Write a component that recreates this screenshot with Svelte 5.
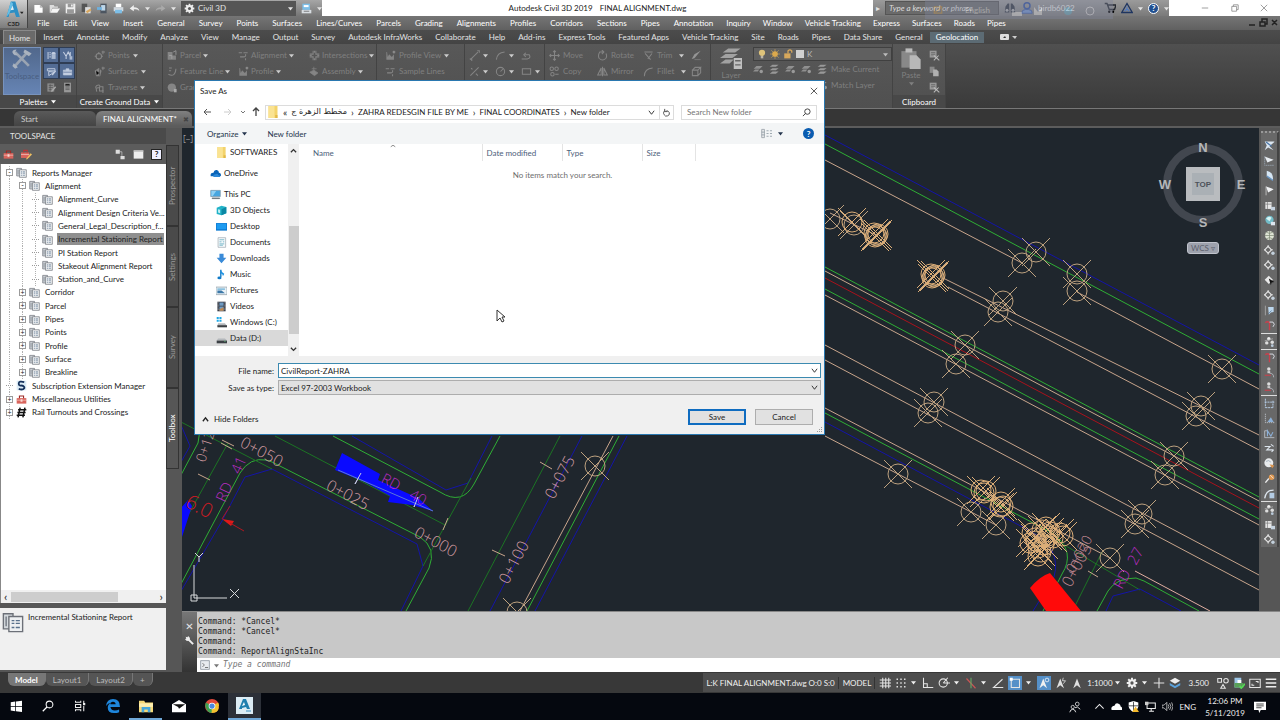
<script>
    const menus = ["File", "Edit", "View", "Insert", "General", "Survey", "Points", "Surfaces", "Lines/Curves", "Parcels", "Grading", "Alignments", "Profiles", "Corridors", "Sections", "Pipes", "Annotation"];
    const moreMenus = ["Inquiry", "Window", "Vehicle Tracking", "Express", "Surfaces", "Roads", "Pipes"];

    const ribbonTabs = ["Home", "Insert", "Annotate", "Modify", "Analyze", "View", "Manage", "Output", "Survey", "Autodesk InfraWorks", "Collaborate", "Help", "Add-ins", "Express Tools", "Featured Apps", "Vehicle Tracking", "Site", "Roads", "Pipes", "Data Share", "General", "Geolocation"];

    const groundData = [["points", "Points"], ["surface", "Surfaces"], ["traverse", "Traverse"]];

    const designColumns = [
        [["parcel", "Parcel"], ["curve", "Feature Line"], ["grading", "Grading"]],
        [["align", "Alignment"], ["profile", "Profile"]],
        [["cross", "Intersections"], ["assembly", "Assembly"]]
    ];

    const tree = [
        { label: "Reports Manager", level: 0, box: "-", icon: "report" },
        { label: "Alignment", level: 1, box: "-", icon: "report" },
        { label: "Alignment_Curve", level: 2, icon: "report" },
        { label: "Alignment Design Criteria Ve...", level: 2, icon: "report" },
        { label: "General_Legal_Description_f...", level: 2, icon: "report" },
        { label: "Incremental Stationing Report", level: 2, icon: "report", selected: true },
        { label: "PI Station Report", level: 2, icon: "report" },
        { label: "Stakeout Alignment Report", level: 2, icon: "report" },
        { label: "Station_and_Curve", level: 2, icon: "report" },
        { label: "Corridor", level: 1, box: "+", icon: "report" },
        { label: "Parcel", level: 1, box: "+", icon: "report" },
        { label: "Pipes", level: 1, box: "+", icon: "report" },
        { label: "Points", level: 1, box: "+", icon: "report" },
        { label: "Profile", level: 1, box: "+", icon: "report" },
        { label: "Surface", level: 1, box: "+", icon: "report" },
        { label: "Breakline", level: 1, box: "+", icon: "report" },
        { label: "Subscription Extension Manager", level: 0, icon: "sub" },
        { label: "Miscellaneous Utilities", level: 0, box: "+", icon: "toolbox" },
        { label: "Rail Turnouts and Crossings", level: 0, box: "+", icon: "rail" }
    ];

    const sideTabs = ["Prospector", "Settings", "Survey", "Toolbox"];

    const places = [
        { label: "SOFTWARES", icon: "folder", child: true },
        { label: "OneDrive", icon: "cloud", root: true },
        { label: "This PC", icon: "pc", root: true },
        { label: "3D Objects", icon: "cube", child: true },
        { label: "Desktop", icon: "desktop", child: true },
        { label: "Documents", icon: "doc", child: true },
        { label: "Downloads", icon: "down", child: true },
        { label: "Music", icon: "music", child: true },
        { label: "Pictures", icon: "picture", child: true },
        { label: "Videos", icon: "video", child: true },
        { label: "Windows (C:)", icon: "winDrive", child: true },
        { label: "Data (D:)", icon: "drive", child: true, selected: true }
    ];

    const crumbs = ["مخطط الزهرة ج", "ZAHRA REDESGIN FILE BY ME", "FINAL COORDINATES", "New folder"];

    const toolGroups = [
        ["t1", "t2", "t3", "t4", "t5", "t6", "t7", "t8", "t8", "t9", "t8", "t10", "t11"],
        ["t12"],
        ["t11", "t13", "t13"],
        ["t14", "t15", "t16", "t17", "t18", "t19", "t20"],
        ["t12", "t5", "t8"]
    ];

    const history = ["Command: *Cancel*", "Command: *Cancel*", "Command:", "Command: ReportAlignStaInc"];

    let fileName = "CivilReport-ZAHRA";

    // drawing entities, in canvas coordinates
    const tan = "#c8a58c";
    const green = "#2fae35";
    const darkGreen = "#1c7424";
    const blue = "#1414a8";
    const lines = [
        [blue, "M825 135L1259 365"],
        [green, "M825 144L1259 374"],
        [tan, "M825 160L1022 263M1077 292L1259 389M943 278L1259 435M948 287L1259 450"],
        [green, "M825 267L1259 497M825 289L1259 519"],
        [tan, "M825 271L1259 501M825 295L1259 525M825 345L1259 575M825 360L1259 590M825 408L1110 558M825 436L898 474L971 512L996 525M876 235L830 213"],
        ["#a8121c", "M825 278L1259 508"],
        [green, "M825 413L1054 534Q1076 552 1062 574L1043 611"],
        [blue, "M825 422L1030 531Q1062 548 1054 577L1033 611"],
        [darkGreen, "M1075 606L1102 552M1056 540L1140 590"],
        [green, "M1097 611L1108 591Q1116 578 1136 578L1144 581L1199 611"],
        [blue, "M1106 611L1113 596L1140 589L1181 611"],
        ["#e0aea0", "M1135 571L1210 611"],
        [green, "M181 584L240 473Q250 457 266 460L272 462L420 537Q437 548 429 568L406 611"],
        [blue, "M181 591L222 521L245 477L272 469L417 544L423 566L401 611"],
        [green, "M333 436L440 492Q462 506 474 484L500 436"],
        [blue, "M352 436L446 490L468 483L492 436"],
        [darkGreen, "M275 436L445 525M181 422L272 469M560 436L468 611M471 478L423 566M181 528L228 443"],
        [green, "M181 475L198 443L200 430M619 436L527 611"],
        [blue, "M181 462L190 446L181 425M582 436L490 611M627 436L535 611"],
        [tan, "M613 436L520 611M540 462L552 469M492 550L505 556M443 530L448 518M198 474L210 480M221 443L232 449M222 440L234 446M1088 571L1098 577"],
        ["#b8bce0", "M355 484L361 473M414 507L418 497"]
    ];

    const points = [[830, 219], [854, 225], [876, 235], [933, 276], [1036, 252], [1022, 263], [1077, 274], [1077, 291], [1003, 301], [998, 312], [965, 345], [956, 364], [1222, 369], [934, 402], [928, 413], [1201, 406], [1196, 416], [898, 474], [971, 512], [996, 525], [1110, 558], [1174, 456], [1165, 475], [1142, 514], [1135, 524], [595, 466], [517, 612]];

    const densePoints = [[852, 222], [874, 233], [877, 236], [875, 237], [878, 234], [931, 274], [934, 277], [932, 278], [935, 275], [981, 490], [984, 493], [986, 491], [1001, 502], [1003, 506], [1000, 507], [1032, 533], [1035, 538], [1030, 543], [1038, 548], [1042, 530], [1046, 527], [1050, 532], [1053, 538], [1060, 533], [1063, 536], [1044, 545], [1041, 552], [1038, 556], [1036, 541], [1048, 536]];

    const labels = [
        ["0+050", 239, 446, 28, "#d09aa0", 16],
        ["0+025", 325, 489, 28, "#d09aa0", 16],
        ["0+000", 413, 536, 28, "#d09aa0", 16],
        ["0+075", 554, 500, -62, "#d09aa0", 16],
        ["0+100", 508, 585, -62, "#d09aa0", 16],
        ["0+12", 205, 463, -72, "#d09aa0", 14],
        ["0+005", 1071, 588, -62, "#c48a94", 16],
        ["0+020", 1074, 574, -62, "#c48a94", 14],
        ["RD", 380, 482, 28, "#b82cc0", 15],
        ["40", 408, 498, 28, "#b82cc0", 15],
        ["RD", 225, 503, -66, "#b82cc0", 15],
        ["41", 240, 475, -66, "#b82cc0", 15],
        ["RD", 1122, 590, -62, "#b82cc0", 15],
        ["27", 1136, 566, -62, "#b82cc0", 15],
        ["6.0", 184, 506, 28, "#cc1c24", 20]
    ];

    const g = 'fill="none" stroke="#858585" stroke-width="1.5"';
    const w = 'fill="none" stroke="#e4e4e4" stroke-width="1.4"';
    const icons = {
        newDoc: '<path d="M2 3h8l4 4v7H2z" fill="#fff"/><path d="M10 3v4h4" fill="#bbb"/>',
        open: '<path d="M1 3h6l1 2h5v2H5l-3 7H1z" fill="#ddd"/><path d="M5 8h11l-4 6H2z" fill="#f5f5f5"/>',
        save: '<path d="M1 1h14v14H1z" fill="#eee"/><path d="M4 1h8v5H4zM3 9h10v6H3z" fill="#999"/><path d="M9 2h2v3H9z" fill="#fff"/>',
        saveAs: '<path d="M1 1h8v12H1z" fill="#555"/><path d="M6 6h8v9H6z" fill="#ddd"/><path d="M7 12l7-4 1 3-6 4z" fill="#d8a860"/>',
        mobile: '<path d="M5 1h9v14H5z" fill="#4c5560"/><path d="M6 3h6v8H6z" fill="#bdd6e8"/><path d="M0 6h7v4H0z" fill="#6db1df"/>',
        share: '<path d="M2 1h11v9H2z" fill="#7dbfe8"/><path d="M4 3h7v3H4z" fill="#fff"/><path d="M1 10h14v5H1z" fill="#d8dde2"/><path d="M4 12h8" stroke="#555"/>',
        print: '<path d="M4 1h8v5H4z" fill="#fff"/><path d="M1 6h14v6H1z" fill="#d2d9df"/><path d="M3 10h10v5H3z" fill="#7dbfe8"/>',
        undo: '<path d="M1 8l6-5v3c5 0 8 2 8 6-2-3-4-3-8-3v3z" fill="#eee"/>',
        redo: '<path d="M15 8L9 3v3c-5 0-8 2-8 6 2-3 4-3 8-3v3z" fill="#aaa"/>',
        gear: '<path d="M8 1v14M1 8h14M3 3l10 10M13 3L3 13" stroke="#eee" stroke-width="2.6"/><circle cx="8" cy="8" r="5" fill="#eee"/><circle cx="8" cy="8" r="2.2" fill="#555"/>',
        tools: '<path d="M3 13L12 3M3 3l10 10" stroke="#9aa4b2" stroke-width="2"/><path d="M1 3q0-2 3-2L3 3l2 2q-3 1-4-2zM10 1l5 3-2 2-4-3zM2 11l3 3-2 1-2-2z" fill="#aab3bf"/>',
        p1: '<path d="M3 3v10M5 4h2M5 7h2M5 10h2" stroke="#c2cde0" stroke-width="1.5"/><ellipse cx="11" cy="5" rx="3" ry="2" fill="#c2cde0"/><path d="M8 6h6v7H8z" fill="#aab9d0"/>',
        p2: '<path d="M2 3l4 6 3-6 3 6V3M6 9v4" fill="none" stroke="#c2cde0" stroke-width="1.6"/><path d="M11 9h4v5h-4z" fill="#aab9d0"/>',
        p3: '<path d="M2 4h11v3H2zM4 8l8 1-8 5z" fill="none" stroke="#c2cde0" stroke-width="1.4"/><path d="M9 13l5-6" stroke="#c2cde0" stroke-width="2"/>',
        p4: '<path d="M2 6h12v7H2zM6 6V4h4v2" fill="#c2cde0" stroke="#c2cde0"/><path d="M2 9h12" stroke="#536c94"/>',
        p5: '<path d="M2 2h10v12H2z" fill="#8a8a8a"/><path d="M4 5h6M4 8h6M4 11h4M6 3v10" stroke="#555"/><path d="M8 14l6-7" stroke="#aaa" stroke-width="2"/>',
        p6: '<path d="M3 1h10v14H3z" fill="#999"/><path d="M5 3h6v2H5zM5 7h6M5 9h6M5 11h6" stroke="#555"/>',
        points: `<circle cx="7" cy="9" r="4" ${g}/><path d="M7 3v3M7 12v3M1 9h3M10 9h3M13 1v5M11 3h5" ${g}/>`,
        surface: '<path d="M1 7l6-4 4 4-2 8H3z" fill="#858585"/><path d="M3 7l5 3-4 3M8 4v10M13 1v5M11 3h5" stroke="#555"/><path d="M13 1v5M11 3h5" stroke="#999"/>',
        traverse: `<path d="M2 8q2-5 7-3M4 14l-1-5 5-1M8 7h5v6H8z" ${g}/><path d="M13 12v4" ${g}/>`,
        parcel: '<path d="M1 3h7v5h5v6H1z" fill="#858585"/><path d="M3 8h4v5M9 3l4-2v6" stroke="#aaa" fill="none"/>',
        curve: `<path d="M2 12q10 5 11-8M3 3h4M3 7h3" ${g}/>`,
        grading: '<circle cx="7" cy="8" r="6" fill="#858585"/><path d="M10 10h4v5h-4z" fill="#aaa"/>',
        align: `<path d="M1 4h5M8 4h6M3 10h5q4 0 3-4M11 12v3" ${g}/>`,
        profile: '<path d="M2 3v11h11V6l-3 4-4-4-2 4-1-7z" fill="#858585"/><path d="M13 1v4M11 3h4" stroke="#999" stroke-width="1.5"/>',
        cross: `<path d="M6 1v5H1M10 1v5h5M6 15v-5H1M10 15v-5h5M8 1v3M8 12v3M1 8h3M12 8h3" ${g}/>`,
        assembly: '<path d="M1 9l6-3 6 4-5 4zM7 1v6M4 4h7" fill="#858585" stroke="#858585"/>',
        line: `<path d="M2 14L13 3" ${g}/><path d="M1 13h3v3M12 1h3v3" ${g}/>`,
        arc: `<path d="M2 14Q3 4 14 3" ${g}/>`,
        pline: `<path d="M1 13h8q6-1 3-6H5" ${g}/><path d="M7 4L4 7l3 3" ${g}/>`,
        xline: `<path d="M2 14L14 2M3 3l2 2M10 11l3 3" ${g}/>`,
        circle: `<circle cx="8" cy="8" r="6" ${g}/><path d="M8 8l4-4" ${g}/>`,
        rect: `<path d="M2 4h12v8H2z" ${g}/>`,
        move: `<path d="M8 1v14M1 8h14M6 3l2-2 2 2M6 13l2 2 2-2M3 6L1 8l2 2M13 6l2 2-2 2" ${g}/>`,
        copy: `<circle cx="4" cy="4" r="2.5" ${g}/><circle cx="11" cy="4" r="2.5" ${g}/><circle cx="5" cy="12" r="2.5" ${g}/><path d="M9 12h5" ${g}/>`,
        rotate: `<path d="M9 3H4Q1 8 3 12q5 5 10 0 2-3 0-7M7 0l3 3-3 3" ${g}/>`,
        mirror: `<path d="M6 3v10H1zM10 3v10h5zM8 1v14" ${g}/>`,
        trim: `<path d="M2 3h12M3 5l8 9M13 5l-6 8" ${g}/>`,
        fillet: `<path d="M2 15Q2 4 14 3" ${g}/>`,
        erase: '<path d="M1 13l4-1 9-11-9 5z" fill="#959595"/><path d="M5 14h9" stroke="#858585"/>',
        box: `<path d="M2 6h8v8H2zM2 6l4-4h8l-4 4M14 2v8l-4 4" ${g}/>`,
        layers: '<path d="M6 1h9l-4 3H2zM4 5h9l-4 3H0zM4 9h6l-3 3H0z" fill="#a2a2a2"/><path d="M10 8h6v8h-6z" fill="#c0c0c0"/><path d="M11 10h4M11 13h4" stroke="#666"/>',
        lay: '<path d="M5 3h9l-4 4H1zM3 8h6l-2 3H0z" fill="#909090"/><circle cx="12" cy="11" r="2.5" fill="#999"/>',
        lay2: '<path d="M5 1h9l-4 3H1zM5 6h9l-4 3H1zM5 11h9l-4 3H1z" fill="#999"/>',
        bulb: '<circle cx="8" cy="6" r="5" fill="#dec37a"/><path d="M6 11h4v4H6z" fill="#bdb6a8"/>',
        sun: '<path d="M8 0v16M0 8h16M2 2l12 12M14 2L2 14" stroke="#caa556"/><circle cx="8" cy="8" r="4.5" fill="#dca94c"/>',
        lock: '<path d="M2 7h10v8H2z" fill="#d7a85c"/><path d="M8 7V3q3-3 6 0v3" fill="none" stroke="#d7a85c" stroke-width="2"/>',
        paste: '<path d="M1 3h11v12H1z" fill="#888"/><path d="M4 1h5v3H4z" fill="#bbb"/><path d="M7 6h5l3 3v7H7z" fill="#b8b8b8"/>',
        cut: '<path d="M1 1h10v10H1z" fill="#999"/><path d="M3 4h6M3 7h6" stroke="#555"/><path d="M7 8l8 7M14 8l-7 7" stroke="#bbb" stroke-width="1.5"/>',
        pages: '<path d="M1 1h7v9H1z" fill="#888"/><path d="M6 5h5l3 3v7H6z" fill="#b0b0b0"/>',
        person: '<circle cx="8" cy="5" r="4" fill="none" stroke="#2f4f9c" stroke-width="2"/><path d="M1 15q0-5 5-5h4q5 0 5 5z" fill="#7090c8" stroke="#2f4f9c"/>',
        binoc: '<path d="M2 6l3-4h2v12H1zM14 6l-3-4H9v12h6z" fill="#303640"/><circle cx="4" cy="11" r="2" fill="#aaa"/><circle cx="12" cy="11" r="2" fill="#aaa"/>',
        cart: '<path d="M1 2h3l3 8h7l2-6H5" fill="none" stroke="#23272f" stroke-width="1.8"/><circle cx="7" cy="13" r="1.6"/><circle cx="12" cy="13" r="1.6"/>',
        app: '<path d="M8 2L1 14h14z" fill="none" stroke="#1f3560" stroke-width="1.8"/><path d="M8 6v5M5 12l3-3 3 3" stroke="#4e79c0" fill="none" stroke-width="1.5"/>',
        report: '<path d="M1 2h7v11H1z" fill="#d5dade" stroke="#6c7078"/><path d="M5 4h10v11H5z" fill="#eef0f2" stroke="#6c7078"/><path d="M7 7h2M10 7h3M7 9h2M10 9h3M7 12h2M10 12h3" stroke="#59718c"/><path d="M3 4v7" stroke="#707780"/>',
        sub: '<path d="M1 1h14v14H1z" fill="#dcecf6"/><path d="M12 3Q4 1 4 5t4 3q5 1 4 4-2 3-8 1" fill="none" stroke="#14305a" stroke-width="2.6"/>',
        toolbox: '<path d="M1 6h14v8H1z" fill="#d8645c"/><path d="M5 6V3h6v3" fill="none" stroke="#9b2a26" stroke-width="1.6"/><path d="M1 9h14M7 8h2v3H7z" stroke="#f4c6c0" fill="#fff"/>',
        toolboxEdit: '<path d="M0 5h12v8H0z" fill="#d8645c"/><path d="M4 5V2h5v3" fill="none" stroke="#b33" stroke-width="1.5"/><path d="M0 8h12" stroke="#f4c6c0"/><path d="M7 15l7-9 2 2-7 7z" fill="#f0c060"/>',
        rail: '<path d="M6 1L3 15M13 1l-3 14M3 4h12M2 8h12M1 12h12" stroke="#111" stroke-width="2.2" fill="none"/>',
        nodes: '<path d="M1 1h6v6H1zM8 10h6v5H8z" fill="#ddd"/><path d="M7 4h3v6" stroke="#ccc" fill="none"/>',
        panel: '<path d="M1 2h14v12H1z" fill="#eee"/><path d="M1 2h14v2H1z" fill="#bbb"/>',
        folder: '<path d="M2 0h12v16H2z" fill="#f3d36b"/><path d="M2 0h8v16H2z" fill="#fae392"/><path d="M11 12h3v4h-3z" fill="#e2b848"/>',
        cloud: '<path d="M1 12q-1-5 4-5 1-5 5-4 3 1 3 4 3 0 3 4 0 1-2 1z" fill="#0a64b8"/><path d="M5 13q-1-4 3-4 3-2 4 1 3 0 3 3z" fill="#2b88d8"/>',
        pc: '<path d="M1 2h14v9H1z" fill="#47a6e0" stroke="#7d96a8"/><path d="M2 3h7l-5 7H2z" fill="#8fd0f4"/><path d="M3 13h11v1H3z" stroke="#7a8892"/>',
        cube: '<path d="M1 4l7-3 7 2v9l-7 3-7-2z" fill="#22b3c8"/><path d="M8 6l7-3v9l-7 3z" fill="#0b87a4"/><path d="M3 6l3 1v5l-3-1z" fill="#c4f1f5"/>',
        desktop: '<path d="M0 3h16v11H0z" fill="#0b78d0"/><path d="M1 4h14v8H1z" fill="#1e9bf0"/>',
        doc: '<path d="M3 1h11v14H3z" fill="#f5f9fb" stroke="#9aa8b0"/><path d="M5 4h7M5 7h3M10 7h2M5 10h7M5 12h5" stroke="#4aa0b8"/>',
        down: '<path d="M5 1h6v6h4l-7 8-7-8h4z" fill="#3a8bd8"/>',
        music: '<path d="M7 1v11" stroke="#0f7ac8" stroke-width="2"/><path d="M7 1q1 4 5 6-1 3-2 3 0-3-3-4z" fill="#1c90e0"/><ellipse cx="5" cy="13" rx="3" ry="2" fill="#0f7ac8"/>',
        picture: '<path d="M0 3h16v11H0z" fill="#e9f1f6" stroke="#8a9aa4"/><path d="M2 8h6l5 4H2z" fill="#3c78a8"/><path d="M2 6h11" stroke="#74b4d8" stroke-width="2"/>',
        video: '<path d="M2 1h12v14H2z" fill="#3a3f4a"/><path d="M5 2h6v5H5zM5 8h6v6H5z" fill="#6f9cc4"/><path d="M5 12l6-3v5H5z" fill="#c08850"/><path d="M3 2v12M13 2v12" stroke="#ccc" stroke-dasharray="1 1"/>',
        winDrive: '<path d="M1 0h3v3H1zM5 0h3v3H5zM1 4h3v3H1zM5 4h3v3H5z" fill="#1ca8e8"/><path d="M3 9h10l3 4H2z" fill="#b4b8bc"/><path d="M2 12h14v3H2z" fill="#3c4044"/>',
        drive: '<path d="M3 8h10l3 3H1z" fill="#b4b8bc"/><path d="M1 11h15v4H1z" fill="#3c4044"/><path d="M12 12h2" stroke="#6d8"/>',
        views: '<path d="M1 2h4v12H1z" fill="#e8eaec" stroke="#8a949c"/><path d="M8 4h3M8 8h3M8 12h3M13 4h3M13 8h3M13 12h3M1 6h4M1 10h4" stroke="#7c8a94"/>',
        wrench: '<path d="M4 4l9 9" stroke="#eee" stroke-width="3"/><path d="M1 1l3 1 1-2 3 3-1 4-4 1-3-3 2-1z" fill="#eee"/>',
        prompt: '<path d="M1 1h14v14H1z" fill="#e8ecf0" stroke="#6f7a86"/><path d="M4 5l3 3-3 3M8 12h5" fill="none" stroke="#333"/>',
        grid: `<path d="M5 1v14M9 1v14M13 1v14M1 4h15M1 8h15M1 12h15" ${w}/>`,
        snap: '<path d="M2 3h2M7 3h2M12 3h2M2 8h2M7 8h2M12 8h2M2 13h2M7 13h2M12 13h2" stroke="#ddd" stroke-width="2"/>',
        ortho: `<path d="M2 1v13h13M2 9h5v5" ${w}/>`,
        polar: `<circle cx="7" cy="8" r="5.5" ${w}/><path d="M7 8h9M7 8l6-7" ${w}/>`,
        iso: '<path d="M2 2l12 13" stroke="#c55" stroke-width="1.5"/><path d="M8 1v14" stroke="#6a6" stroke-width="1.5"/>',
        angle: `<path d="M14 3L2 14h13" ${w}/>`,
        osnap: `<path d="M3 3h11v11H3z" ${w}/><path d="M1 1h4v4H1z" fill="#fff"/>`,
        annot: '<path d="M7 2l5 13-5-4-5 4z" fill="#f0f0f0"/><circle cx="12" cy="4" r="2.5" fill="none" stroke="#fff"/>',
        annot2: '<path d="M7 2l5 13-5-4-5 4z" fill="#e0e0e0"/><path d="M11 1l-1 4h4l-3 4" fill="none" stroke="#eee"/>',
        annot3: '<path d="M8 2l5 13-5-4-5 4z" fill="#e0e0e0"/>',
        plus: `<path d="M8 1v14M1 8h14" ${w}/>`,
        stack: '<path d="M8 1l7 4-7 4-7-4z" fill="#eee"/><path d="M1 8l7 4 7-4v3l-7 4-7-4z" fill="#5ba2dc"/>',
        shapes: `<path d="M1 2h5v5H1zM5 15l3-5 3 5z" ${w}/><circle cx="12" cy="5" r="3" ${w}/>`,
        image: '<path d="M2 1h9v13H2z" fill="#9fc8e8"/><path d="M2 8h12v6H2z" fill="#58a058"/><path d="M6 4h5v4H6z" fill="#fff"/><path d="M9 12l2 3 5-6" fill="none" stroke="#5d5" stroke-width="2"/>',
        full: `<path d="M1 3h14v11H1zM9 6h3v2M7 11H4V9" ${w}/>`,
        burger: '<path d="M1 3h14M1 8h14M1 13h14" stroke="#eee" stroke-width="2"/>',
        win: '<path d="M1 3l6-1v6H1zM8 2l8-1v7H8zM1 9h6v6l-6-1zM8 9h8v7l-8-1z" fill="#fff"/>',
        search: '<circle cx="10" cy="6" r="4.5" fill="none" stroke="#fff" stroke-width="1.4"/><path d="M7 9l-6 6" stroke="#fff" stroke-width="1.6"/>',
        taskview: '<path d="M2 1v2h7V1M2 6h7v4H2zM2 15v-2h7v2M13 1v3M13 8v7" fill="none" stroke="#eee" stroke-width="1.4"/><path d="M12 4h3v3h-3z" fill="#eee"/>',
        edge: '<path d="M0 8Q1 0 8 0q8 0 8 9H5q1 4 5 4 3 0 5-1v3q-2 1-6 1-7 0-7-6 0-4 4-6Q2 5 0 8zM5 6h6q0-3-3-3T5 6z" fill="#1e86dc"/>',
        explorer: '<path d="M0 2h6l1 2h9v11H0z" fill="#f6d978"/><path d="M0 5h16v4H0z" fill="#fdeeb0"/><path d="M3 15V9h10v6h-3v-3H6v3z" fill="#47a8dc"/>',
        mail: '<path d="M0 6l8-5 8 5v9H0z" fill="#fff"/><path d="M1 6h14l-7 5-1-2z" fill="#111"/>',
        chrome: '<circle cx="8" cy="8" r="8" fill="#e04a3c"/><path d="M8 8L1 4Q-1 9 3 14q2 2 5 2l3-6z" fill="#3ea252"/><path d="M8 8h7.5q1 5-4 7.5Q10 16 7.5 16z" fill="#f2c330"/><path d="M15 4q1 2 1 4H8z" fill="#f2c330"/><circle cx="8" cy="8" r="3.8" fill="#fff"/><circle cx="8" cy="8" r="3" fill="#4a88e0"/>',
        people: '<circle cx="11" cy="4" r="2.5" fill="none" stroke="#eee"/><circle cx="5" cy="8" r="2.2" fill="none" stroke="#eee"/><path d="M1 15q1-4 4-4t4 4M8 9q3-3 7 2" fill="none" stroke="#eee" stroke-width="1.2"/>',
        chevUp: '<path d="M2 11l6-6 6 6" fill="none" stroke="#eee" stroke-width="1.5"/>',
        cloudW: '<path d="M1 13q-2-5 4-6 2-5 6-3 3 1 3 4 3 1 2 5z" fill="#fff"/>',
        shield: '<path d="M1 2l7-2 7 2v6q-1 5-7 8-6-3-7-8z" fill="#fff"/><path d="M8 1v14M1 7h14" stroke="#111"/><path d="M11 8l5 8H6z" fill="#f4b92c"/>',
        net: '<path d="M3 3h12v8H3zM9 11v4M6 15h7" fill="none" stroke="#eee" stroke-width="1.5"/><path d="M0 1h5v5H0z" fill="#ccc"/>',
        sound: '<path d="M0 6h3l4-4v12l-4-4H0z" fill="none" stroke="#eee"/><path d="M9 5q2 3 0 6M11 3q4 5 0 10M14 2q4 6 0 12" fill="none" stroke="#eee"/>',
        note: '<path d="M0 1h16v11h-7l-2 4-1-4H0z" fill="#fff"/><path d="M3 4h10M3 6.5h10M3 9h7" stroke="#111"/>',
        t1: '<path d="M1 2h14v1L8 9l6 6-8-4-5 4 3-7z" fill="#dce6f0"/><path d="M3 3l8 6" stroke="#4d78a8" stroke-width="2"/>',
        t2: '<path d="M1 2l13 5-9 4z" fill="#e8edf2"/><path d="M1 2v13h14" stroke="#a8b8c8" stroke-dasharray="2 1" fill="none"/>',
        t3: '<path d="M4 1q10 2 9 14L4 9z" fill="#d6e6f4"/><path d="M4 9l9 6" stroke="#6b97c4" stroke-width="2"/>',
        t4: '<path d="M3 2l11 4-8 5z" fill="#f0f2f4"/><path d="M3 2v13" stroke="#ddd"/>',
        t5: '<path d="M2 3h9v10H2z" fill="#e8e8e8"/><path d="M5 3v10M2 6h9" stroke="#777"/><path d="M10 10h6v5h-6z" fill="#c6d3e0"/>',
        t6: '<circle cx="8" cy="7" r="6" fill="#72bcc8"/><path d="M3 5q4-4 8-1L8 9z" fill="#d8f4f4"/><path d="M10 10h6v5h-6z" fill="#dde5ee"/>',
        t7: '<circle cx="8" cy="8" r="6.5" fill="#dfe5d6"/><path d="M8 1v14M1 8h14M3 3q5 4 10 0M3 13q5-4 10 0" stroke="#7a8472" fill="none"/>',
        t8: '<path d="M6 2l5 5-5 5-5-5z" fill="none" stroke="#e4e4e4" stroke-width="1.6"/><path d="M6 0v4M6 10v4M0 7h3M9 7h4" stroke="#ddd" stroke-width="1.4"/><circle cx="13" cy="12" r="2.5" fill="#c3d0dc"/>',
        t9: '<path d="M7 1l6 6-6 6-6-6z" fill="#e8e8e8"/><path d="M7 5l8 5-4 1-1 4z" fill="#111"/>',
        t10: '<path d="M2 1v14" stroke="#bbb"/><path d="M6 3h8v7l-4 1-3 3z" fill="#bcd7ee"/><path d="M6 13l5-5" stroke="#4d6d90"/>',
        t11: '<path d="M2 4q3-3 6 0v11" fill="none" stroke="#c8404c" stroke-width="2"/><path d="M8 3h5q4 3 0 7" fill="none" stroke="#d8dce4" stroke-width="1.4"/>',
        t12: '<circle cx="7" cy="4" r="2.5" fill="#eee"/><circle cx="4" cy="10" r="2.5" fill="#ddd"/><circle cx="12" cy="9" r="2.5" fill="#ddd"/><circle cx="12" cy="14" r="2" fill="#b8c8d8"/><path d="M1 7l12-3" stroke="#bbb"/>',
        t13: '<circle cx="7" cy="3" r="2.5" fill="#ddd"/><path d="M5 6h4v3H5z" fill="#ccc"/><path d="M1 12h9" stroke="#c8404c" stroke-width="1.6"/><path d="M8 9q6 0 6 6" fill="none" stroke="#c8ccd4"/>',
        t14: '<path d="M2 1v13M1 6h14M13 4v10M2 14h12" fill="none" stroke="#b4cbe4" stroke-width="1.4" stroke-dasharray="3 1"/>',
        t15: '<path d="M2 1v13h13" stroke="#d0d8e0" stroke-dasharray="2 1" fill="none"/><path d="M5 13l5-7 4 7z" fill="#8cb0d8"/>',
        t16: '<path d="M1 4h4M1 4v10h14" stroke="#d0d8e0" fill="none"/><path d="M5 12V4l5 8 3-6" fill="none" stroke="#8cb0d8" stroke-width="1.6"/>',
        t17: '<path d="M1 5h8l-5 5h10M10 2l4 3M11 13l3-3" stroke="#dce4ec" stroke-width="1.5" fill="none"/>',
        t18: '<circle cx="7" cy="7" r="6.5" fill="#e8eaec"/><path d="M8 9l7 2-3 4z" fill="#d8924c"/><path d="M3 5q4-3 7 1" stroke="#8898a8" fill="none"/>',
        t19: '<path d="M2 14l5-6" stroke="#eee" stroke-width="2"/><circle cx="11" cy="6" r="4" fill="#e09850"/><path d="M9 3l5 5" stroke="#fff"/>',
        t20: '<path d="M1 15Q3 3 14 3" fill="none" stroke="#dce4ec" stroke-width="2"/><path d="M8 7h7v8H8z" fill="#b4cce4"/>'
    };
</script>

{#snippet icon(name, size)}
    <svg class="icon" viewBox="0 0 16 16" width={size} height={size} aria-hidden="true">{@html icons[name]}</svg>
{/snippet}

{#snippet caret()}
    <svg class="caret" viewBox="0 0 8 8" width="5" height="5" aria-hidden="true"><path d="M0 2h8L4 7z" fill="currentColor" /></svg>
{/snippet}

{#snippet chevron()}
    <svg viewBox="0 0 8 8" width="7" height="7" aria-hidden="true"><path d="M1 2l3 4 3-4" fill="none" stroke="currentColor" /></svg>
{/snippet}

<div class="screen">
    <header class="top">
        <button class="app-button" aria-label="Application menu">
            <svg viewBox="0 0 27 27" width="27" height="27">
                <path d="M4 23L10 2h6l6 21h-5l-2-6-7 1-1 5z" fill="#2d8fc4" />
                <path d="M12 7l-3 7 5-1z" fill="#e3eef4" />
                <path d="M4 23L10 2l3 3-5 13z" fill="#66bfe6" />
                <path d="M22 16h5l-2 3z" fill="#222" />
            </svg>
            <span>C3D</span>
        </button>
        <div class="top-rows">
            <div class="title-row">
                <div class="quick-access">
                    {#each ["newDoc", "open", "save", "saveAs", "mobile", "print", "undo"] as name}
                        <button aria-label={name}>{@render icon(name, 11)}</button>
                    {/each}
                    {@render caret()}
                    <button aria-label="Redo">{@render icon("redo", 11)}</button>
                    {@render caret()}
                    <button class="workspace">{@render icon("gear", 11)}<span>Civil 3D</span>{@render caret()}</button>
                    {@render icon("share", 11)}
                    {@render caret()}
                </div>
                <div class="window-title"><span>Autodesk Civil 3D 2019</span><span>FINAL ALIGNMENT.dwg</span></div>
                <div class="info-center">
                    <span class="expand">▸</span>
                    <input aria-label="Search help" placeholder="Type a keyword or phrase" />
                    {@render icon("binoc", 12)}
                    {@render icon("person", 12)}
                    <span class="user">birdb6022</span>
                    {@render icon("cart", 12)}
                    {@render icon("app", 12)}
                    {@render caret()}
                    <button class="help-ball">?</button>
                    {@render caret()}
                    <div class="language-bar">
                        <svg viewBox="0 0 16 16" width="10" height="10"><path d="M2 3h12v10H2zM4 11l8-6" fill="none" stroke="#e0a850" stroke-width="2" /></svg>
                        <span>English</span>
                        <svg viewBox="0 0 90 16" width="90" height="16">
                            <path d="M0 10h10v4H0zM22 5l4 5 4-5v8h-8z" fill="#e8e8f0" />
                            <circle cx="56" cy="9" r="4" fill="#5fb0d8" /><circle cx="78" cy="9" r="4" fill="none" stroke="#e8e8f8" />
                        </svg>
                    </div>
                </div>
                <div class="window-buttons">
                    <button aria-label="Minimize"><svg viewBox="0 0 10 10" width="8" height="8"><path d="M1 5h8" stroke="#888" /></svg></button>
                    <button aria-label="Restore"><svg viewBox="0 0 10 10" width="8" height="8"><path d="M1 3h6v6H1zM3 3V1h6v6H7" fill="none" stroke="#888" /></svg></button>
                    <button aria-label="Close"><svg viewBox="0 0 10 10" width="8" height="8"><path d="M1 1l8 8M9 1L1 9" stroke="#888" /></svg></button>
                </div>
            </div>
            <nav class="menu-row">
                <div class="menus">
                    {#each menus as menu}
                        <button>{menu}</button>
                    {/each}
                </div>
                <div class="menus tight">
                    {#each moreMenus as menu}
                        <button>{menu}</button>
                    {/each}
                </div>
                <svg class="mdi" viewBox="0 0 32 10" width="32" height="10"><path d="M1 7h6M12 4h5v4h-5zM14 4V1h5v5h-2M24 2l5 5M29 2l-5 5" fill="none" stroke="#222" stroke-width="1.5" /></svg>
            </nav>
        </div>
    </header>

    <nav class="ribbon-tabs">
        {#each ribbonTabs as tab}
            <button class:active={tab === "Home"} class:context={tab === "Geolocation"}>{tab}</button>
        {/each}
        <svg viewBox="0 0 18 8" width="18" height="8"><rect x="0" y="1" width="9" height="6" rx="1" fill="#ddd" /><path d="M3 5l2-2 1 2z" fill="#333" /><path d="M12 3h5l-2 3z" fill="#ccc" /></svg>
    </nav>

    <section class="ribbon">
        <div class="panel palettes">
            <div class="panel-body">
                <button class="toolspace-button">{@render icon("tools", 22)}<span>Toolspace</span></button>
                <div class="palette-grid">
                    {#each ["p1", "p2", "p3", "p4", "p5", "p6"] as name, i}
                        <button class:lit={i < 4} aria-label="Palette {i + 1}">{@render icon(name, 11)}</button>
                    {/each}
                </div>
            </div>
            <div class="panel-title">Palettes {@render caret()}</div>
        </div>
        <div class="panel ground">
            <div class="panel-body column">
                {#each groundData as [name, label]}
                    <button class="tool">{@render icon(name, 11)}<span>{label}</span>{@render caret()}</button>
                {/each}
            </div>
            <div class="panel-title">Create Ground Data {@render caret()}</div>
        </div>
        <div class="panel design">
            <div class="panel-body">
                {#each designColumns as column}
                    <div class="column">
                        {#each column as [name, label]}
                            <button class="tool">{@render icon(name, 11)}<span>{label}</span>{@render caret()}</button>
                        {/each}
                    </div>
                {/each}
            </div>
        </div>
        <div class="panel views">
            <div class="panel-body column">
                <button class="tool">{@render icon("profile", 11)}<span>Profile View</span>{@render caret()}</button>
                <button class="tool">{@render icon("align", 11)}<span>Sample Lines</span></button>
            </div>
        </div>
        <div class="panel draw">
            <div class="panel-body draw-grid">
                {#each ["line", "arc", "pline", "xline", "circle", "rect"] as name}
                    <button class="tool" aria-label={name}>{@render icon(name, 11)}{#if name !== "pline"}{@render caret()}{/if}</button>
                {/each}
            </div>
        </div>
        <div class="panel modify">
            <div class="panel-body modify-grid">
                <button class="tool">{@render icon("move", 11)}<span>Move</span></button>
                <button class="tool">{@render icon("rotate", 11)}<span>Rotate</span></button>
                <button class="tool split">{@render icon("trim", 11)}<span>Trim</span>{@render caret()}</button>
                <button class="tool" aria-label="Erase">{@render icon("erase", 11)}</button>
                <button class="tool">{@render icon("copy", 11)}<span>Copy</span></button>
                <button class="tool">{@render icon("mirror", 11)}<span>Mirror</span></button>
                <button class="tool split">{@render icon("fillet", 11)}<span>Fillet</span>{@render caret()}</button>
                <button class="tool" aria-label="Explode">{@render icon("box", 11)}</button>
            </div>
        </div>
        <div class="panel layer">
            <div class="panel-body">
                <button class="big-tool">{@render icon("layers", 22)}<span>Layer</span></button>
                <div class="layer-rows">
                    <button class="layer-pick">{@render icon("bulb", 10)}{@render icon("sun", 10)}{@render icon("lock", 10)}<i class="swatch"></i><span>K</span>{@render caret()}</button>
                    <div class="layer-row">
                        {#each ["lay", "lay2", "lay", "lay"] as name}{@render icon(name, 11)}{/each}
                        <button class="tool">{@render icon("lay2", 11)}<span>Make Current</span></button>
                    </div>
                    <div class="layer-row">
                        {#each ["lay", "lay2", "lay", "lay"] as name}{@render icon(name, 11)}{/each}
                        <button class="tool">{@render icon("lay", 11)}<span>Match Layer</span></button>
                    </div>
                </div>
            </div>
        </div>
        <div class="panel clipboard">
            <div class="panel-body">
                <button class="big-tool">{@render icon("paste", 22)}<span>Paste</span>{@render caret()}</button>
                <div class="column">
                    {#each ["cut", "pages", "cut"] as name}
                        <button class="tool" aria-label={name}>{@render icon(name, 11)}</button>
                    {/each}
                </div>
            </div>
            <div class="panel-title">Clipboard</div>
        </div>
    </section>

    <div class="doc-tabs">
        <button>Start</button>
        <button class="current">FINAL ALIGNMENT*<span>✖</span></button>
    </div>

    <main>
        <aside class="toolspace">
            <div class="toolspace-main">
                <h2>TOOLSPACE</h2>
                <div class="toolspace-bar">
                    {@render icon("toolbox", 11)}
                    {@render icon("toolboxEdit", 11)}
                    <span class="spacer"></span>
                    {@render icon("nodes", 11)}
                    {@render icon("panel", 11)}
                    <button class="ask">?</button>
                </div>
                <div class="tree-box">
                    <ul class="tree">
                        {#each tree as node}
                            <li class="level{node.level}" class:selected={node.selected}>
                                <span class="box" class:empty={!node.box}>{node.box ?? ""}</span>
                                {@render icon(node.icon, 11)}
                                <span class="node-label">{node.label}</span>
                            </li>
                        {/each}
                    </ul>
                    <div class="hscroll"><span>‹</span><div class="thumb"></div><span>›</span></div>
                </div>
                <div class="detail">{@render icon("report", 22)}<span>Incremental Stationing Report</span></div>
            </div>
            <div class="side-tabs">
                {#each sideTabs as tab}
                    <button class:current={tab === "Toolbox"}>{tab}</button>
                {/each}
            </div>
        </aside>

        <section class="work">
            <div class="viewport">
                <div class="canvas">
                    <svg class="drawing" viewBox="182 128 1077 483" preserveAspectRatio="xMinYMin slice">
                        {#each lines as [color, d]}
                            <path {d} fill="none" stroke={color} />
                        {/each}
                        <path d="M342 453L380 474L378 480L418 498L433 511L412 505L388 502L390 496L365 482L335 470ZM181 508L188 500L192 506L181 540Z" fill="#0a0aff" />
                        <path d="M338 470L433 511" stroke="#5c78d8" />
                        <path d="M355 484L361 473M414 507L418 497" stroke="#c8cce8" />
                        <path d="M1030 588Q1040 576 1050 573L1081 611H1046Z" fill="#ff0a0a" />
                        <path d="M222 519L234 521L231 526Z" fill="#e01818" />
                        <path d="M230 523L244 531M222 519L230 506" stroke="#b01820" />
                        <g fill="none" stroke="#bda17f">
                            {#each points as [x, y]}
                                <circle cx={x} cy={y} r="10" />
                                <path d="M{x - 14} {y - 14}l28 28m0 -28l-28 28" />
                            {/each}
                        </g>
                        <g fill="none" stroke="#dcae78">
                            {#each densePoints as [x, y]}
                                <circle cx={x} cy={y} r="10" />
                                <path d="M{x - 14} {y - 14}l28 28m0 -28l-28 28" />
                            {/each}
                        </g>
                        {#each labels as [text, x, y, angle, color, size]}
                            <text {x} {y} fill={color} font-size={size} transform="rotate({angle} {x} {y})">{text}</text>
                        {/each}
                        <path d="M194 598V565M194 598H227M191 595h6v6h-6zM230 589l9 9M239 589l-9 9M195 553l4 4l4 -4M199 557v5" fill="none" stroke="#d8dadc" />
                        <text x="183" y="142" fill="#d0d0d0" font-size="9">[–]</text>
                    </svg>
                    <div class="viewcube">
                        <svg viewBox="0 0 90 90" width="90" height="90">
                            <circle cx="45" cy="45" r="36" fill="none" stroke="#42474f" stroke-width="8" />
                            <rect x="28" y="28" width="34" height="34" fill="#b9bcbf" />
                            <rect x="34" y="34" width="22" height="22" fill="#aab0b5" />
                            <text x="45" y="48" class="cube-face">TOP</text>
                            <text x="45" y="13" class="compass">N</text>
                            <text x="45" y="88" class="compass">S</text>
                            <text x="7" y="50" class="compass">W</text>
                            <text x="83" y="50" class="compass">E</text>
                        </svg>
                        <button class="wcs">WCS <span>▿</span></button>
                    </div>
                </div>
                <div class="tool-strip">
                    {#each toolGroups as group}
                        <div class="tool-group">
                            {#each group as name}{@render icon(name, 11)}{/each}
                        </div>
                    {/each}
                </div>
            </div>
            <div class="command">
                <div class="command-grip"><span>✕</span>{@render icon("wrench", 10)}</div>
                <div class="command-body">
                    <div class="history">
                        {#each history as row}<p>{row}</p>{/each}
                    </div>
                    <label class="prompt">{@render icon("prompt", 10)}{@render caret()}<input aria-label="Command" placeholder="Type a command" /></label>
                </div>
            </div>
        </section>
    </main>

    <footer class="status">
        <div class="layout-tabs">
            <button class="current">Model</button>
            <button>Layout1</button>
            <button>Layout2</button>
            <button>+</button>
        </div>
        <div class="status-tools">
            <span class="cell">L:K FINAL ALIGNMENT.dwg O:0 S:0</span>
            <button class="cell">MODEL</button>
            {@render icon("grid", 12)}
            {@render icon("snap", 12)}
            {@render caret()}
            {@render icon("ortho", 12)}
            {@render icon("polar", 12)}
            {@render caret()}
            {@render icon("iso", 12)}
            {@render caret()}
            {@render icon("angle", 12)}
            <button class="lit" aria-label="Object snap">{@render icon("osnap", 12)}</button>
            {@render caret()}
            <button class="lit" aria-label="Annotation visibility">{@render icon("annot", 12)}</button>
            {@render icon("annot2", 12)}
            {@render icon("annot3", 12)}
            <button class="scale">1:1000 {@render caret()}</button>
            {@render icon("gear", 12)}
            {@render caret()}
            {@render icon("plus", 12)}
            {@render icon("stack", 12)}
            <span class="elevation">3.500</span>
            {@render icon("shapes", 12)}
            {@render icon("image", 12)}
            {@render icon("full", 12)}
            {@render icon("burger", 12)}
        </div>
    </footer>

    <div class="taskbar">
        <div class="task-buttons">
            {#each ["win", "search", "taskview"] as name}
                <button aria-label={name}>{@render icon(name, 12)}</button>
            {/each}
            {#each ["edge", "explorer", "mail", "chrome"] as name}
                <button class="pinned" class:open={name === "explorer"} aria-label={name}>{@render icon(name, 14)}</button>
            {/each}
            <button class="pinned open focused" aria-label="Civil 3D">
                <svg viewBox="0 0 17 17" width="17" height="17"><path d="M0 0h17v17H0z" fill="#dcecf4" /><path d="M3 12L7 2h3l4 10h-3l-1-2-4 1v1z" fill="#1f7fae" /><path d="M8 5l-2 4 3-1z" fill="#fff" /><path d="M10 14h5" stroke="#3a8fc0" /></svg>
            </button>
        </div>
        <div class="tray">
            {@render icon("people", 12)}
            <span class="tray-gap"></span>
            {#each ["chevUp", "cloudW", "shield", "net", "sound"] as name}{@render icon(name, 11)}{/each}
            <span>ENG</span>
            <div class="clock"><span>12:06 PM</span><span>5/11/2019</span></div>
            {@render icon("note", 12)}
        </div>
    </div>

    <div class="dialog" role="dialog" aria-label="Save As">
        <div class="dialog-title">
            <span>Save As</span>
            <button aria-label="Close dialog"><svg viewBox="0 0 10 10" width="8" height="8"><path d="M1 1l8 8M9 1L1 9" stroke="#333" /></svg></button>
        </div>
        <div class="dialog-nav">
            <div class="arrows">
                <svg viewBox="0 0 60 12" width="60" height="12">
                    <path d="M6 3L3 6l3 3M3 6h7" fill="none" stroke="#555" />
                    <path d="M27 3l3 3-3 3M23 6h7" fill="none" stroke="#ccc" />
                    <path d="M40 5l2 2 2-2" fill="none" stroke="#777" />
                    <path d="M52 5l3-3 3 3M55 2v8" fill="none" stroke="#444" stroke-width="1.3" />
                </svg>
            </div>
            <div class="address">
                {@render icon("folder", 12)}
                <span class="more">«</span>
                {#each crumbs as crumb, i}
                    {#if i > 0}<span class="sep">›</span>{/if}
                    <span class:arabic={i === 0}>{crumb}</span>
                {/each}
                <span class="spacer"></span>
                {@render chevron()}
                <button class="refresh" aria-label="Refresh"><svg viewBox="0 0 10 10" width="9" height="9"><path d="M3 3Q0 6 4 9q5 0 4-4Q7 3 5 3M3 1v3h3" fill="none" stroke="#444" /></svg></button>
            </div>
            <label class="search"><input aria-label="Search New folder" placeholder="Search New folder" /><svg viewBox="0 0 10 10" width="9" height="9"><circle cx="6" cy="4" r="3" fill="none" stroke="#333" /><path d="M4 6L1 9" stroke="#333" /></svg></label>
        </div>
        <div class="dialog-tools">
            <button>Organize {@render caret()}</button>
            <button>New folder</button>
            <span class="spacer"></span>
            <button class="view-mode" aria-label="Change view">{@render icon("views", 11)}{@render caret()}</button>
            <button class="help-dot">?</button>
        </div>
        <div class="browser">
            <ul class="places">
                {#each places as place}
                    <li class:child={place.child} class:root={place.root} class:selected={place.selected}>{@render icon(place.icon, 11)}<span>{place.label}</span></li>
                {/each}
            </ul>
            <div class="vscroll">
                <svg viewBox="0 0 8 8" width="7" height="7"><path d="M1 6l3-3 3 3" fill="none" stroke="#333" stroke-width="1.5" /></svg>
                <div class="thumb"></div>
                <svg viewBox="0 0 8 8" width="7" height="7"><path d="M1 2l3 3 3-3" fill="none" stroke="#333" stroke-width="1.5" /></svg>
            </div>
            <div class="files">
                <table>
                    <thead>
                        <tr>
                            <th class="name-col"><svg class="sort" viewBox="0 0 8 4" width="6" height="4"><path d="M1 3l3-2 3 2" fill="none" stroke="#666" /></svg>Name</th>
                            <th class="std-col">Date modified</th>
                            <th class="std-col">Type</th>
                            <th class="size-col">Size</th>
                            <th></th>
                        </tr>
                    </thead>
                </table>
                <p>No items match your search.</p>
            </div>
        </div>
        <div class="fields">
            <label for="file-name">File name:</label>
            <div class="field white"><input id="file-name" bind:value={fileName} />{@render chevron()}</div>
            <label for="file-type">Save as type:</label>
            <div class="field"><select id="file-type"><option>Excel 97-2003 Workbook</option></select>{@render chevron()}</div>
        </div>
        <div class="dialog-actions">
            <button class="hide"><svg viewBox="0 0 8 8" width="7" height="7"><path d="M1 6l3-4 3 4" fill="none" stroke="#222" stroke-width="1.5" /></svg>Hide Folders</button>
            <span class="spacer"></span>
            <button class="action primary">Save</button>
            <button class="action">Cancel</button>
        </div>
        <svg class="grip" viewBox="0 0 6 6" width="6" height="6"><path d="M4 0h1v1H4zM2 2h1v1H2zM4 2h1v1H4zM0 4h1v1H0zM2 4h1v1H2zM4 4h1v1H4z" fill="#999" /></svg>
    </div>

    <svg class="pointer" viewBox="0 0 10 15" width="10" height="15"><path d="M1 1v11l3-3 2 4 2-1-2-4h3z" fill="#fff" stroke="#333" /></svg>
</div>

<style>
    :global(body) {
        background: #383838;
    }

    .screen {
        position: relative;
        display: flex;
        flex-direction: column;
        height: 100vh;
        overflow: hidden;
        font-family: Lato, "Open Sans", "DejaVu Sans", sans-serif;
        font-size: 8px;
        line-height: 12px;
        color: #e4e4e4;
        background: #383838;
    }

    button, input, select {
        font: inherit;
        color: inherit;
        background: none;
        border: 0;
        padding: 0;
        margin: 0;
        outline: 0;
        white-space: nowrap;
    }

    svg {
        flex: none;
        display: block;
    }

    ul {
        list-style: none;
        margin: 0;
        padding: 0;
    }

    .spacer {
        flex: 1;
    }

    .top {
        display: flex;
        height: 30px;
        background: linear-gradient(#8e8e8e, #606060);
    }

    .app-button {
        display: flex;
        flex-direction: column;
        width: 28px;
        height: 28px;
        background: linear-gradient(#d0d0d0, #7c7c7c);
        border-right: 1px solid #444;
    }

    .app-button svg {
        height: 20px;
    }

    .app-button span {
        color: #1c1c1c;
        font-size: 6px;
        font-weight: bold;
        line-height: 7px;
        text-align: center;
        width: 100%;
    }

    .top-rows {
        flex: 1;
        min-width: 0;
    }

    .title-row {
        display: flex;
        height: 16px;
        background: #fff;
    }

    .quick-access {
        display: flex;
        align-items: center;
        gap: 5px;
        width: 289px;
        padding-left: 5px;
        background: linear-gradient(#a6a6a6, #767676);
    }

    .workspace {
        display: flex;
        align-items: center;
        gap: 3px;
        flex: 1;
        height: 15px;
        padding: 0 3px;
        background: #555;
    }

    .workspace span {
        flex: 1;
        text-align: left;
        font-size: 8px;
    }

    .window-title {
        display: flex;
        flex: 1;
        justify-content: center;
        align-items: center;
        gap: 7px;
        color: #222;
    }

    .info-center {
        position: relative;
        display: flex;
        align-items: center;
        gap: 5px;
        width: 293px;
        padding-left: 3px;
        background: linear-gradient(#9b9b9b, #7a7a7a);
    }

    .info-center input {
        flex: 1;
        min-width: 0;
        height: 14px;
        padding-left: 3px;
        background: #6a6a6a;
        border: 1px solid #555;
        box-sizing: border-box;
        font-style: italic;
    }

    .info-center input::placeholder {
        color: #ddd;
        opacity: 1;
    }

    .user {
        width: 61px;
    }

    .help-ball {
        width: 11px;
        height: 11px;
        border-radius: 50%;
        border: 1px solid #fff;
        background: #204f90;
        color: #fff;
        font-weight: bold;
        line-height: 9px;
    }

    /* fading language bar over the search box */
    .language-bar {
        position: absolute;
        top: 0;
        left: 52px;
        display: flex;
        align-items: center;
        gap: 22px;
        width: 180px;
        height: 19px;
        padding-left: 8px;
        background: #80869c;
        opacity: 0.4;
        color: #fff;
    }

    .window-buttons {
        display: flex;
        width: 111px;
        justify-content: space-between;
        padding: 0 12px 0 32px;
        box-sizing: border-box;
    }

    .menu-row {
        display: flex;
        align-items: center;
        gap: 13px;
        height: 14px;
        padding-left: 9px;
        color: #fff;
    }

    .menus {
        display: flex;
        gap: 14px;
    }

    .menus.tight {
        gap: 12px;
    }

    .mdi {
        margin-left: auto;
    }

    .ribbon-tabs {
        display: flex;
        align-items: center;
        gap: 13px;
        height: 14px;
        padding-left: 3px;
        background: linear-gradient(#4c4c4c, #444);
    }

    .ribbon-tabs .active {
        height: 14px;
        padding: 0 5px;
        margin-right: -6px;
        background: #6a6a6a;
        border: 1px solid #8a8a8a;
        border-bottom: 0;
        box-sizing: border-box;
    }

    .ribbon-tabs .context {
        height: 11px;
        padding: 0 6px;
        margin: 0 3px 0 -6px;
        background: #5c6b74;
        line-height: 10px;
        color: #fff;
    }

    .ribbon {
        display: flex;
        height: 65px;
        background: linear-gradient(#505050, #3a3a3a);
        border-bottom: 1px solid #777;
        box-sizing: border-box;
    }

    .panel {
        display: flex;
        flex-direction: column;
        background: linear-gradient(#585858, #505050);
        border-right: 1px solid #434343;
        box-sizing: border-box;
        color: #808080;
    }

    .panel-body {
        display: flex;
        height: 51px;
        padding-top: 3px;
        box-sizing: border-box;
    }

    .panel-title {
        display: flex;
        justify-content: center;
        align-items: center;
        gap: 4px;
        flex: 1;
        background: #484848;
        color: #fff;
    }

    .column {
        display: flex;
        flex-direction: column;
    }

    .tool {
        display: flex;
        align-items: center;
        gap: 3px;
        height: 16px;
    }

    .tool .caret {
        color: #ccc;
    }

    .split .caret {
        margin-left: 4px;
    }

    .palettes {
        width: 77px;
    }

    .toolspace-button {
        display: flex;
        flex-direction: column;
        align-items: center;
        width: 38px;
        margin-left: 3px;
        background: linear-gradient(#51688c, #6684b4);
        border: 1px solid #7893bd;
        box-sizing: border-box;
        color: #4a5e80;
    }

    .palette-grid {
        display: grid;
        grid-template-columns: 16px 16px;
        grid-auto-rows: 16px;
        padding-left: 2px;
    }

    .palette-grid button {
        display: grid;
        place-items: center;
    }

    .palette-grid .lit {
        background: #536c94;
        border: 1px solid #2f3d54;
    }

    .ground {
        width: 86px;
    }

    .ground .column {
        padding-left: 17px;
    }

    .design {
        width: 214px;
    }

    .design .column {
        width: 67px;
        padding-left: 4px;
    }

    .design .tool {
        gap: 2px;
    }

    .views {
        width: 88px;
    }

    .views .column {
        padding-left: 8px;
    }

    .draw {
        width: 80px;
    }

    .draw-grid {
        display: grid;
        grid-template-columns: repeat(3, 26px);
        grid-auto-rows: 16px;
        padding-left: 4px;
    }

    .modify {
        width: 166px;
    }

    .modify-grid {
        display: grid;
        grid-template-columns: 48px 46px 48px 16px;
        grid-auto-rows: 16px;
        padding-left: 4px;
    }

    .layer {
        width: 182px;
    }

    .big-tool {
        display: flex;
        flex-direction: column;
        align-items: center;
        width: 40px;
    }

    .layer-rows {
        flex: 1;
        padding-left: 2px;
    }

    .layer-pick {
        display: flex;
        align-items: center;
        gap: 3px;
        width: 100%;
        height: 14px;
        padding: 0 3px;
        background: #606060;
        border: 1px solid #404040;
        color: #bbb;
    }

    .layer-pick span {
        flex: 1;
        text-align: left;
    }

    .swatch {
        width: 8px;
        height: 8px;
        background: #d0d0d0;
    }

    .layer-row {
        display: flex;
        align-items: center;
        gap: 5px;
        height: 16px;
    }

    .clipboard {
        width: 53px;
    }

    .clipboard .big-tool {
        width: 36px;
    }

    .doc-tabs {
        display: flex;
        align-items: flex-end;
        height: 19px;
        padding-left: 14px;
        background: #363636;
        border-bottom: 2px solid #5c5c5c;
        box-sizing: border-box;
    }

    .doc-tabs button {
        width: 82px;
        height: 15px;
        padding-left: 7px;
        border-radius: 6px 6px 0 0;
        background: linear-gradient(#5a5a5a, #444);
        text-align: left;
        color: #ccc;
    }

    .doc-tabs .current {
        width: 96px;
        background: linear-gradient(#808080, #5c5c5c);
        color: #fff;
    }

    .doc-tabs span {
        padding-left: 6px;
        color: #444;
        font-size: 7px;
    }

    main {
        display: flex;
        flex: 1;
        min-height: 0;
        background: #565656;
    }

    .toolspace {
        display: flex;
        width: 182px;
    }

    .toolspace-main {
        display: flex;
        flex-direction: column;
        width: 166px;
    }

    h2 {
        margin: 0;
        padding-left: 10px;
        height: 16px;
        line-height: 16px;
        font-size: 8px;
        font-weight: normal;
        background: #4a4a4a;
    }

    .toolspace-bar {
        display: flex;
        align-items: center;
        gap: 7px;
        height: 20px;
        padding: 0 4px 0 3px;
        background: #5c5c5c;
    }

    .ask {
        width: 11px;
        height: 11px;
        background: #eef;
        border: 1px solid #222;
        color: #111;
        font-weight: bold;
        line-height: 8px;
    }

    .tree-box {
        display: flex;
        flex-direction: column;
        flex: 1;
        background: #fff;
        color: #222;
        border-left: 1px solid #888;
    }

    .tree {
        display: grid;
        grid-auto-rows: 1fr;
        height: 253px;
        padding-top: 2px;
        margin-bottom: auto;
    }

    .tree li {
        --dots: repeating-linear-gradient(#b0b0b0 0 1px, transparent 1px 2px);
        display: flex;
        align-items: center;
        gap: 4px;
        padding-left: 5px;
        white-space: nowrap;
        overflow: hidden;
        background: var(--dots) 8px 0 / 1px 100% no-repeat;
    }

    .tree .level1 {
        padding-left: 18px;
        background: var(--dots) 8px 0 / 1px 100% no-repeat, var(--dots) 21px 0 / 1px 100% no-repeat;
    }

    .tree .level2 {
        padding-left: 31px;
        background: var(--dots) 8px 0 / 1px 100% no-repeat, var(--dots) 21px 0 / 1px 100% no-repeat, var(--dots) 34px 0 / 1px 100% no-repeat;
    }

    .box {
        display: grid;
        place-items: center;
        width: 7px;
        height: 7px;
        margin-right: -1px;
        background: #fff;
        border: 1px solid #9a9a9a;
        box-sizing: border-box;
        font-size: 7px;
        line-height: 5px;
    }

    .box.empty {
        height: 1px;
        border: 0;
        border-top: 1px dotted #999;
    }

    .node-label {
        padding: 0 1px;
    }

    .selected .node-label {
        background: #8f8f8f;
    }

    .hscroll {
        display: flex;
        align-items: center;
        gap: 4px;
        height: 13px;
        padding: 0 3px;
        background: #f0f0f0;
        font-size: 12px;
    }

    .hscroll .thumb {
        width: 107px;
        height: 10px;
        margin-right: auto;
        background: #cdcdcd;
    }

    .detail {
        display: flex;
        gap: 4px;
        height: 62px;
        margin-top: 5px;
        margin-bottom: 2px;
        padding: 3px 2px;
        background: #f0f0f0;
        box-sizing: border-box;
        color: #222;
    }

    .side-tabs {
        width: 13px;
        padding-top: 17px;
    }

    .side-tabs button {
        display: block;
        width: 13px;
        height: 81px;
        writing-mode: vertical-rl;
        transform: rotate(180deg);
        background: #4a4a4a;
        border: 1px solid #333;
        box-sizing: border-box;
        color: #999;
        line-height: 11px;
    }

    .side-tabs .current {
        background: #565656;
        color: #fff;
    }

    .work {
        display: flex;
        flex-direction: column;
        flex: 1;
        min-width: 0;
    }

    .viewport {
        display: flex;
        flex: 1;
        min-height: 0;
    }

    .canvas {
        position: relative;
        flex: 1;
        overflow: hidden;
        background: #1f262d;
    }

    .drawing {
        position: absolute;
        width: 100%;
        height: 100%;
        font-family: "Open Sans", sans-serif;
        font-weight: 300;
    }

    .viewcube {
        position: absolute;
        top: 11px;
        right: 11px;
        display: flex;
        flex-direction: column;
        align-items: center;
        gap: 13px;
    }

    .cube-face {
        font: bold 8px "Liberation Sans", sans-serif;
        text-anchor: middle;
        fill: #4c525a;
    }

    .compass {
        font: bold 13px "Liberation Sans", sans-serif;
        text-anchor: middle;
        fill: #b4b6b8;
    }

    .wcs {
        width: 32px;
        height: 12px;
        border-radius: 3px;
        background: #9da1ac;
        border: 1px solid #c0c3cc;
        color: #5c606c;
        line-height: 9px;
    }

    .tool-strip {
        width: 16px;
        margin: 3px 1px 0 2px;
        padding-top: 5px;
        background: #686868;
        border-right: 2px solid #444;
        border-top: 2px dotted #999;
        align-self: flex-start;
    }

    .tool-group {
        display: flex;
        flex-direction: column;
        align-items: center;
        gap: 4px;
        padding: 2px 0;
        border-bottom: 1px solid #ddd;
    }

    .tool-group:last-child {
        border: 0;
    }

    .command {
        display: flex;
        height: 61px;
        border-top: 1px solid #888;
        box-sizing: border-box;
    }

    .command-grip {
        display: flex;
        flex-direction: column;
        align-items: center;
        gap: 4px;
        width: 15px;
        padding-top: 8px;
        background: linear-gradient(#777, #333);
        font-size: 10px;
    }

    .command-body {
        display: flex;
        flex-direction: column;
        flex: 1;
        background: #c8c8c8;
        font-family: "DejaVu Sans Mono", "Liberation Mono", monospace;
        color: #222;
    }

    .history {
        flex: 1;
        padding: 5px 1px 0;
    }

    .history p {
        margin: 0;
        line-height: 10px;
    }

    .prompt {
        display: flex;
        align-items: center;
        gap: 4px;
        height: 14px;
        padding-left: 3px;
        background: #fff;
        color: #777;
    }

    .prompt input {
        flex: 1;
        font-style: italic;
    }

    .status {
        display: flex;
        justify-content: space-between;
        height: 21px;
    }

    .layout-tabs {
        display: flex;
        height: 13px;
        padding: 1px 0 0 8px;
    }

    .layout-tabs button {
        padding: 0 7px;
        background: #555;
        border-radius: 0 0 6px 6px;
        color: #bbb;
        border-right: 1px solid #777;
    }

    .layout-tabs .current {
        background: #777;
        color: #fff;
        font-weight: bold;
    }

    .status-tools {
        display: flex;
        align-items: center;
        gap: 4px;
        height: 19px;
        margin-top: 1px;
        padding: 0 3px;
        background: #4d4d4d;
        color: #f0f0f0;
    }

    .status-tools .caret {
        margin-right: 2px;
    }

    .cell {
        padding-right: 3px;
        border-right: 1px solid #333;
    }

    .status-tools .lit {
        padding: 1px;
        background: #5590c8;
    }

    .scale {
        display: flex;
        align-items: center;
        gap: 2px;
    }

    .elevation {
        padding: 0 4px;
    }

    .taskbar {
        display: flex;
        justify-content: space-between;
        height: 27px;
        background: #05080f;
        color: #eee;
    }

    .task-buttons {
        display: flex;
    }

    .task-buttons button {
        display: grid;
        place-items: center;
        width: 32px;
        border-bottom: 2px solid transparent;
        box-sizing: border-box;
    }

    .task-buttons .pinned {
        width: 33px;
    }

    .task-buttons .open {
        border-color: #6fa8d8;
    }

    .task-buttons .focused {
        background: #2c3038;
    }

    .tray {
        display: flex;
        align-items: center;
        gap: 6px;
        padding-right: 14px;
    }

    .tray-gap {
        width: 1px;
    }

    .clock {
        display: flex;
        flex-direction: column;
        align-items: center;
        width: 46px;
    }

    .dialog {
        position: absolute;
        top: 80px;
        left: 194px;
        display: flex;
        flex-direction: column;
        width: 631px;
        height: 355px;
        background: #f0f0f0;
        border: 1px solid #2a78b0;
        box-sizing: border-box;
        color: #222;
    }

    .dialog-title {
        display: flex;
        justify-content: space-between;
        align-items: center;
        height: 20px;
        padding: 0 6px 0 5px;
        background: #fff;
    }

    .dialog-nav {
        display: flex;
        align-items: center;
        height: 22px;
        padding: 0 7px 0 6px;
        background: #fff;
    }

    .arrows {
        width: 64px;
    }

    .address {
        display: flex;
        align-items: center;
        gap: 4px;
        flex: 1;
        height: 15px;
        padding-left: 1px;
        border: 1px solid #dcdcdc;
        box-sizing: border-box;
        white-space: nowrap;
    }

    .more {
        font-size: 10px;
    }

    .arabic {
        font-family: "DejaVu Sans", sans-serif;
        font-size: 8px;
    }

    .sep {
        font-size: 10px;
    }

    .refresh {
        padding: 2px;
        border-left: 1px solid #ddd;
    }

    .search {
        display: flex;
        align-items: center;
        width: 136px;
        height: 15px;
        margin-left: 7px;
        padding: 0 5px;
        border: 1px solid #dcdcdc;
        box-sizing: border-box;
    }

    .search input {
        flex: 1;
        min-width: 0;
    }

    .search input::placeholder, .prompt input::placeholder {
        color: #757575;
        opacity: 1;
    }

    .dialog-tools {
        display: flex;
        align-items: center;
        gap: 20px;
        height: 21px;
        padding: 0 10px 0 12px;
        background: #f3f5f6;
        color: #24344c;
    }

    .dialog-tools button {
        display: flex;
        align-items: center;
        gap: 4px;
    }

    .dialog-tools .view-mode {
        gap: 6px;
    }

    .dialog-tools .help-dot {
        justify-content: center;
        width: 11px;
        height: 11px;
        border-radius: 50%;
        background: #0a5cb0;
        color: #fff;
        font-weight: bold;
    }

    .browser {
        display: flex;
        height: 212px;
        background: #fff;
    }

    .places {
        width: 93px;
    }

    .places li {
        display: flex;
        align-items: center;
        gap: 3px;
        height: 16px;
        padding-left: 15px;
    }

    .places .child {
        padding-left: 21px;
    }

    .places .root {
        margin-top: 5px;
    }

    .places .selected {
        background: #d9d9d9;
    }

    .vscroll {
        display: flex;
        flex-direction: column;
        align-items: center;
        justify-content: space-between;
        width: 11px;
        padding: 3px 0;
        box-sizing: border-box;
        background: #f0f0f0;
    }

    .vscroll .thumb {
        width: 10px;
        height: 108px;
        margin: auto 0 12px;
        background: #cdcdcd;
    }

    .files {
        flex: 1;
    }

    table {
        width: 100%;
        border-collapse: collapse;
        table-layout: fixed;
    }

    th {
        height: 17px;
        padding: 0 0 0 4px;
        border-right: 1px solid #e4e4e4;
        font-weight: normal;
        text-align: left;
        color: #4c607a;
        box-sizing: border-box;
    }

    th:last-child {
        border: 0;
    }

    .name-col {
        position: relative;
        width: 183px;
        padding-left: 14px;
    }

    .sort {
        position: absolute;
        top: 0;
        left: 50%;
    }

    .std-col {
        width: 80px;
    }

    .size-col {
        width: 53px;
    }

    .files p {
        margin: 8px 0 0;
        padding-left: 2px;
        text-align: center;
        color: #6d6d6d;
    }

    .fields {
        display: grid;
        grid-template-columns: 79px 1fr;
        gap: 2px 4px;
        align-items: center;
        padding: 7px 3px 0 0;
    }

    .fields label {
        text-align: right;
    }

    .field {
        display: flex;
        align-items: center;
        height: 15px;
        padding: 0 2px;
        background: #e1e1e1;
        border: 1px solid #adadad;
        box-sizing: border-box;
    }

    .field.white {
        background: #fff;
        border-color: #3c8ab0;
    }

    .field input, .field select {
        flex: 1;
        appearance: none;
    }

    .dialog-actions {
        display: flex;
        align-items: flex-end;
        gap: 9px;
        padding: 14px 11px 0 7px;
    }

    .hide {
        display: flex;
        align-items: center;
        gap: 5px;
    }

    .action {
        width: 58px;
        height: 16px;
        background: #e1e1e1;
        border: 1px solid #adadad;
    }

    .action.primary {
        border: 2px solid #0f6cc0;
    }

    .grip {
        position: absolute;
        right: 1px;
        bottom: 1px;
    }

    .pointer {
        position: absolute;
        left: 496px;
        top: 309px;
    }
</style>
